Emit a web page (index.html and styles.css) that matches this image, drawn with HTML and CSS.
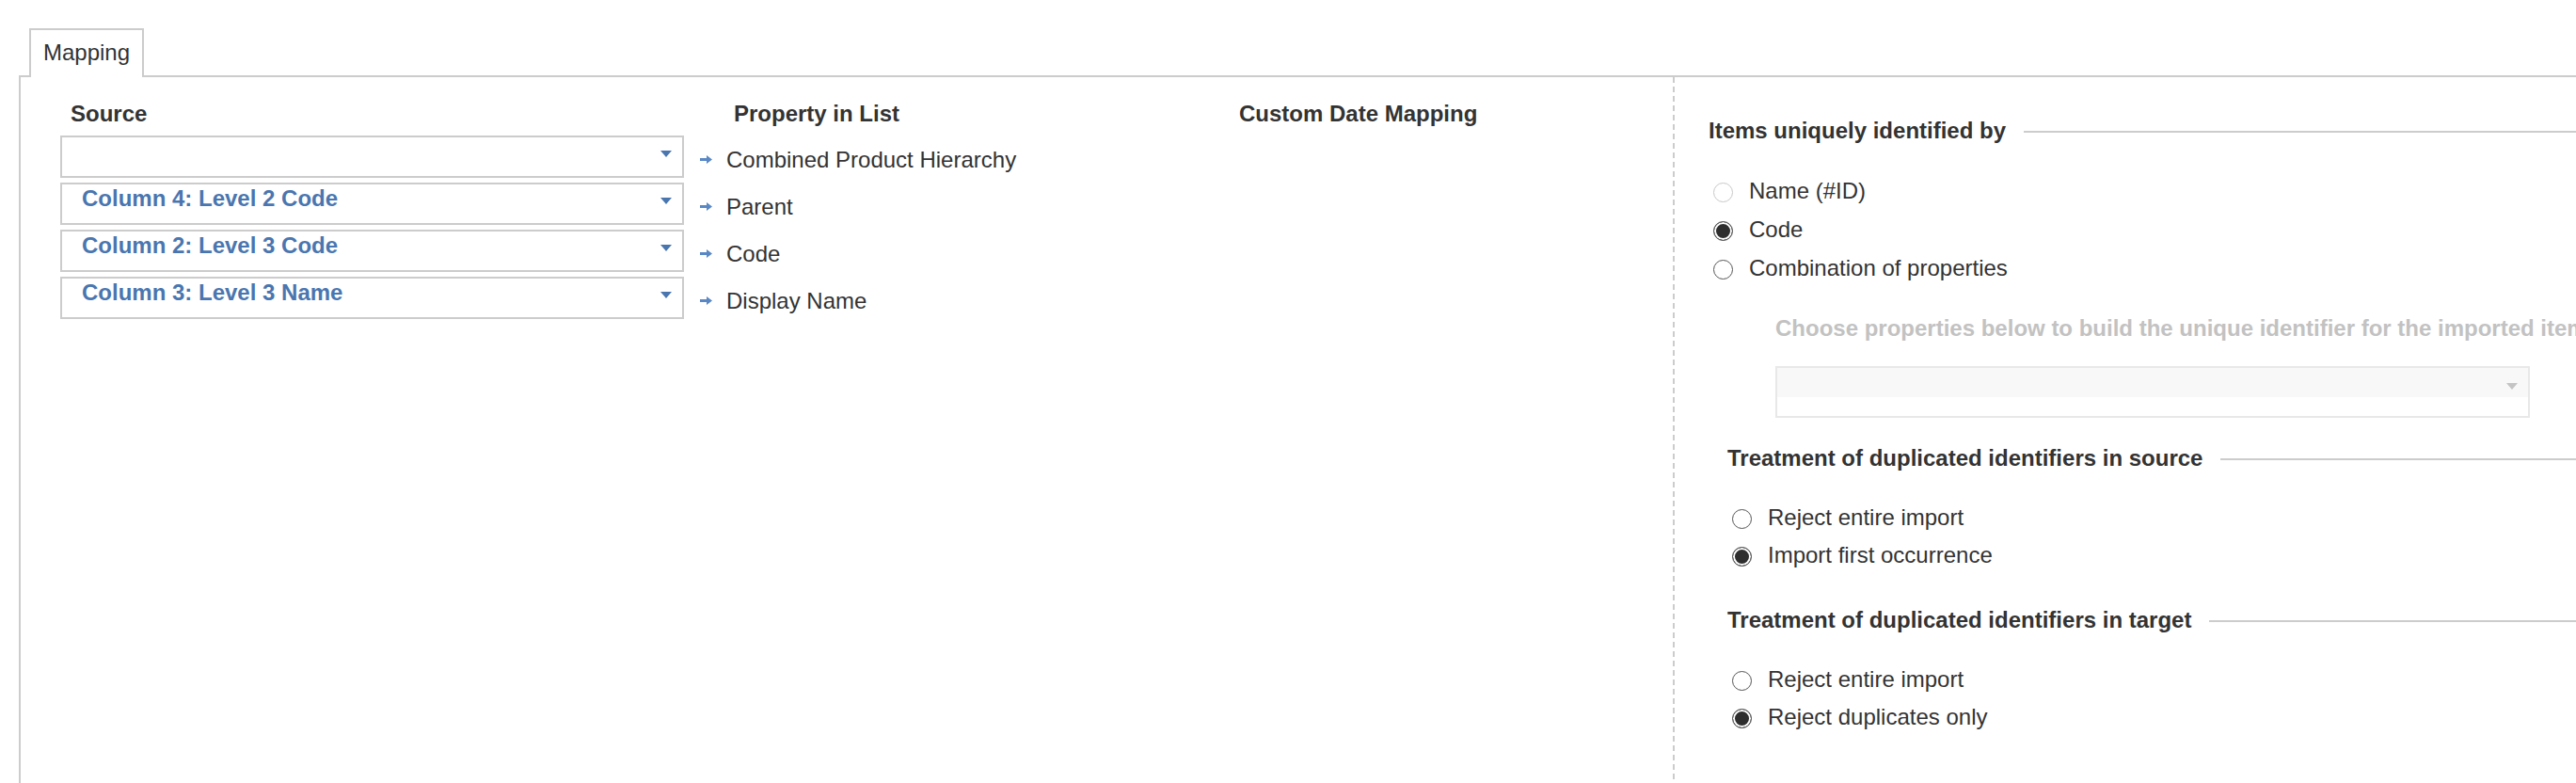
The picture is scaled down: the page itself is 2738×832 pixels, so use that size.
FILE: index.html
```html
<!DOCTYPE html>
<html lang="en">
  <head>
    <meta charset="UTF-8" />
    <meta name="viewport" content="width=device-width, initial-scale=1.0" />
    <title>Import mapping</title>
    <link rel="stylesheet" href="styles.css">
  </head>
  <body>
    <div class="tabs">
      <div class="tab">Mapping</div>
    </div>

    <div class="panel">
      <!-- column mapping -->
      <section class="mapping">
        <div class="head head-source">Source</div>
        <div class="head head-prop">Property in List</div>
        <div class="head head-date">Custom Date Mapping</div>

        <div class="dropdown"><span class="dd-value"></span><span class="caret"></span></div>
        <div class="prop">
          <svg class="prop-arrow" width="13" height="9" viewBox="0 0 13 9"><path d="M0 3H7V0L13 4.5L7 9V6H0Z" /></svg>
          Combined Product Hierarchy
        </div>
        <div></div>

        <div class="dropdown"><span class="dd-value">Column 4: Level 2 Code</span><span class="caret"></span></div>
        <div class="prop">
          <svg class="prop-arrow" width="13" height="9" viewBox="0 0 13 9"><path d="M0 3H7V0L13 4.5L7 9V6H0Z" /></svg>
          Parent
        </div>
        <div></div>

        <div class="dropdown"><span class="dd-value">Column 2: Level 3 Code</span><span class="caret"></span></div>
        <div class="prop">
          <svg class="prop-arrow" width="13" height="9" viewBox="0 0 13 9"><path d="M0 3H7V0L13 4.5L7 9V6H0Z" /></svg>
          Code
        </div>
        <div></div>

        <div class="dropdown"><span class="dd-value">Column 3: Level 3 Name</span><span class="caret"></span></div>
        <div class="prop">
          <svg class="prop-arrow" width="13" height="9" viewBox="0 0 13 9"><path d="M0 3H7V0L13 4.5L7 9V6H0Z" /></svg>
          Display Name
        </div>
        <div></div>
      </section>

      <!-- identifier options -->
      <section class="options">
        <div class="legend">Items uniquely identified by</div>
        <div class="radios radios-main">
          <div class="radio is-disabled"><span class="dot"></span>Name (#ID)</div>
          <div class="radio is-checked"><span class="dot"></span>Code</div>
          <div class="radio"><span class="dot"></span>Combination of properties</div>
        </div>

        <div class="combo">
          <p class="combo-hint">Choose properties below to build the unique identifier for the imported items</p>
          <div class="dropdown dropdown-disabled"><span class="dd-value"></span><span class="caret"></span></div>
        </div>

        <div class="subsection sub-source">
          <div class="legend">Treatment of duplicated identifiers in source</div>
          <div class="radios">
            <div class="radio"><span class="dot"></span>Reject entire import</div>
            <div class="radio is-checked"><span class="dot"></span>Import first occurrence</div>
          </div>
        </div>

        <div class="subsection sub-target">
          <div class="legend">Treatment of duplicated identifiers in target</div>
          <div class="radios">
            <div class="radio"><span class="dot"></span>Reject entire import</div>
            <div class="radio is-checked"><span class="dot"></span>Reject duplicates only</div>
          </div>
        </div>
      </section>
    </div>
  </body>
</html>
```

FILE: styles.css
```css
:root {
  --text: #333333;
  --line: #cccccc;
  --blue: #4a76b0;
  --arrow-blue: #5a88c4;
  --muted: #c2c2c2;
}

html, body {
  height: 100%;
  overflow: hidden; /* the hint text runs past the window edge */
}

body {
  margin: 0;
  padding: 30px 0 0 20px;
  box-sizing: border-box;
  background: #fff;
  color: var(--text);
  font-family: "Liberation Sans", Arial, sans-serif;
  font-size: 24px;
}

/* --- tab strip --- */
.tabs {
  display: flex;
  padding-left: 11px;
}

.tab {
  position: relative;
  z-index: 1;
  background: #fff;
  border: 2px solid var(--line);
  border-bottom: none;
  padding: 0 13px 2px;
  line-height: 48px;
  margin-bottom: -2px; /* sits over the panel's top border */
}

/* --- main panel --- */
.panel {
  display: grid;
  grid-template-columns: 1756px 1fr;
  border-top: 2px solid var(--line);
  border-left: 2px solid var(--line);
  height: 752px;
}

/* left: column mapping */
.mapping {
  display: grid;
  grid-template-columns: 663px 590px 1fr;
  grid-template-rows: 32px;
  grid-auto-rows: 45px;
  row-gap: 5px;
  align-content: start;
  padding: 25px 0 0 42px;
}

.head {
  font-weight: bold;
  line-height: 28px;
  white-space: nowrap;
}

.head-source { padding-left: 11px; }
.head-prop { padding-left: 53px; }

.dropdown {
  position: relative;
  box-sizing: border-box;
  height: 45px;
  border: 2px solid var(--line);
  background: #fff;
  padding: 0 40px 0 21px;
}

.dd-value {
  display: block;
  color: var(--blue);
  font-weight: bold;
  line-height: 30px;
  white-space: nowrap;
}

.caret {
  position: absolute;
  right: 11px;
  top: 14px;
  width: 0;
  height: 0;
  border-left: 6px solid transparent;
  border-right: 6px solid transparent;
  border-top: 7px solid var(--blue);
}

.prop {
  display: flex;
  align-items: center;
  gap: 15px;
  padding: 5px 0 0 17px;
  line-height: 45px;
  white-space: nowrap;
}

.prop-arrow {
  fill: var(--arrow-blue);
  flex: none;
}

/* right: identifier options */
.options {
  padding: 43px 0 0 38px;
  min-width: 0;
  background-image: repeating-linear-gradient(to bottom, var(--line) 0 6px, transparent 6px 10px);
  background-size: 2px 100%;
  background-repeat: no-repeat;
}

.legend {
  display: flex;
  align-items: center;
  gap: 19px;
  font-weight: bold;
  line-height: 28px;
  white-space: nowrap;
}

.legend::after {
  content: '';
  flex: 1;
  height: 2px;
  margin-top: 2px;
  background: var(--line);
}

.radios {
  margin: 29px 0 0 5px;
}

.radio {
  display: flex;
  align-items: center;
  gap: 17px;
  height: 40px;
  line-height: 40px;
}

.radios-main .radio {
  height: 41px;
  line-height: 41px;
}

.dot {
  flex: none;
  box-sizing: border-box;
  width: 21px;
  height: 21px;
  margin-top: 3px;
  border: 1px solid #555;
  border-radius: 50%;
  background: #fff;
}

.is-disabled .dot {
  border-color: #c8c8c8;
}

.is-checked .dot {
  border-color: #555;
  background: #2e2e2e;
  box-shadow: inset 0 0 0 2px #fff;
}

.combo {
  margin: 30px 0 0 71px;
}

.combo-hint {
  margin: 0;
  color: var(--muted);
  font-weight: bold;
  line-height: 28px;
  white-space: nowrap;
}

.dropdown-disabled {
  width: 802px;
  height: 55px;
  margin-top: 26px;
  border-color: #e8e8e8;
  background: linear-gradient(#f8f8f8 0 31px, #fff 31px);
}

.dropdown-disabled .caret {
  top: 16px;
  border-top-color: #c4c4c4;
}

.subsection {
  margin-left: 20px;
}

.sub-source { margin-top: 29px; }
.sub-target { margin-top: 35px; }
```
